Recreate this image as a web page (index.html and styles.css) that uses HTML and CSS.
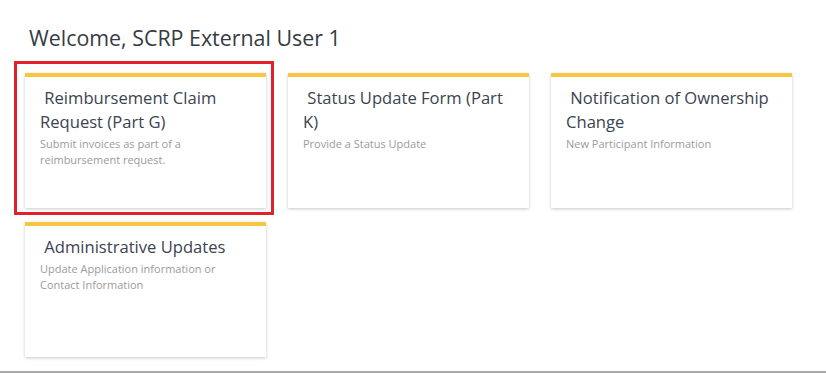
FILE: index.html
```html
<!DOCTYPE html>
<html lang="en">
<head>
    <meta charset="UTF-8">
    <meta name="viewport" content="width=device-width, initial-scale=1.0">
    <title>SCRP Dashboard</title>
    <link rel="stylesheet" href="styles.css">
</head>
<body>
    <main class="dashboard">
        <h1 class="welcome">Welcome, SCRP External User 1</h1>

        <div class="tile-grid">
            <a href="#" class="tile tile-selected">
                <h2 class="tile-title">&nbsp;Reimbursement Claim Request (Part G)</h2>
                <p class="tile-desc">Submit invoices as part of a reimbursement request.</p>
            </a>
            <a href="#" class="tile">
                <h2 class="tile-title">&nbsp;Status Update Form (Part K)</h2>
                <p class="tile-desc">Provide a Status Update</p>
            </a>
            <a href="#" class="tile">
                <h2 class="tile-title">&nbsp;Notification of Ownership Change</h2>
                <p class="tile-desc">New Participant Information</p>
            </a>
            <a href="#" class="tile">
                <h2 class="tile-title">&nbsp;Administrative Updates</h2>
                <p class="tile-desc">Update Application information or Contact Information</p>
            </a>
        </div>
    </main>

    <footer class="page-footer"></footer>
</body>
</html>
```

FILE: styles.css
```css
/* Base */
body {
    margin: 0;
    background-color: #ffffff;
    font-family: 'Open Sans', 'Noto Sans', sans-serif;
    color: #3d434b;
}

.dashboard {
    padding: 23px 0 0 25px;
    box-sizing: border-box;
    height: 371px;
}

.welcome {
    margin: 0 0 21px 4px;
    font-size: 21.4px;
    line-height: 29px;
    font-weight: 400;
    color: #353b42;
}

/* Tiles */
.tile-grid {
    display: grid;
    grid-template-columns: repeat(3, 241px);
    column-gap: 22px;
    row-gap: 14px;
}

.tile {
    position: relative;
    display: block;
    box-sizing: border-box;
    height: 135px;
    padding: 9px 15px 0 15px;
    background-color: #ffffff;
    border-top: 4px solid #f7c744;
    box-shadow: 0 1px 3px rgba(0, 0, 0, 0.22);
    text-decoration: none;
    color: inherit;
}

.tile-title {
    margin: 0;
    font-size: 16.6px;
    line-height: 24px;
    font-weight: 400;
    color: #3b4350;
}

.tile-desc {
    margin: 2px 0 0 0;
    font-size: 11px;
    line-height: 16px;
    color: #9b9b9b;
}

/* Selection outline */
.tile-selected::after {
    content: "";
    position: absolute;
    top: -16px;
    left: -11px;
    right: -8px;
    bottom: -7px;
    border: 3px solid #e2202a;
    pointer-events: none;
}

/* Footer */
.page-footer {
    border-top: 2px solid #a9a9a9;
}
```
